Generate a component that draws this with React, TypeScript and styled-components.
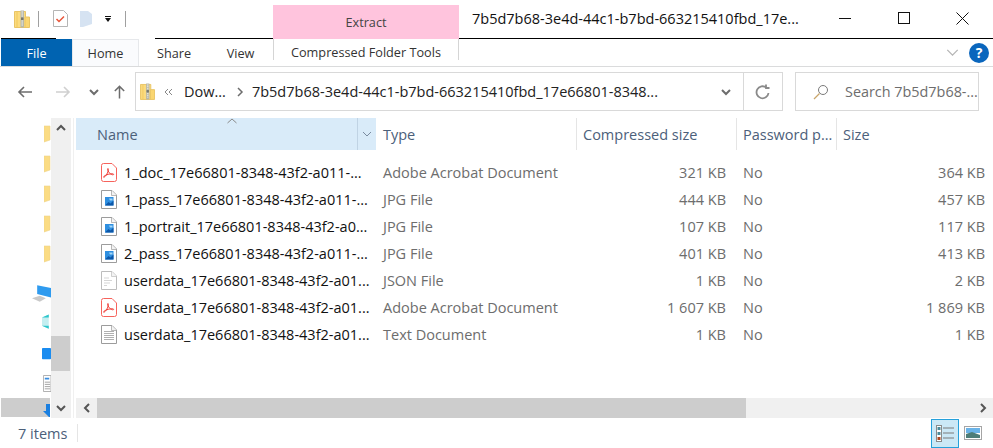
import React from 'react';
import styled, { createGlobalStyle } from 'styled-components';

const GlobalStyle = createGlobalStyle`
  html, body {
    margin: 0;
    padding: 0;
    background: #fff;
    overflow: hidden;
  }
  * {
    box-sizing: border-box;
  }
`;

const Window = styled.div`
  width: 993px;
  height: 448px;
  display: flex;
  flex-direction: column;
  overflow: hidden;
  background: #fff;
  font-family: 'Open Sans', 'Noto Sans', sans-serif;
  font-size: 14.5px;
  color: #1a1a1a;
`;

/* title bar */
const TitleBar = styled.div`
  height: 39px;
  flex-shrink: 0;
  display: flex;
  align-items: flex-start;
`;

const QuickAccess = styled.div`
  width: 273px;
  height: 39px;
  flex-shrink: 0;
  display: flex;
  align-items: center;
  padding: 0 0 2px 14px;
  background:
    linear-gradient(to right, #000, #000) no-repeat 155px 38px / 118px 1px,
    linear-gradient(to right, #000, #000) no-repeat 1px 38px / 55px 1px;
`;

const QuickSeparator = styled.span<{ $left: number; $right: number }>`
  width: 1px;
  height: 16px;
  background: #a0a0a0;
  margin: 0 ${p => p.$right}px 0 ${p => p.$left}px;
`;

const ContextHeader = styled.div`
  width: 186px;
  height: 34px;
  margin-top: 5px;
  flex-shrink: 0;
  display: flex;
  align-items: center;
  justify-content: center;
  background: #ffc4dd;
  color: #444;
  font-size: 12.7px;
`;

const TitleText = styled.div`
  flex: 1;
  height: 39px;
  display: flex;
  align-items: center;
  padding: 0 1px 2px 13px;
  border-bottom: 1px solid #000;
  color: #111;
  white-space: nowrap;
  justify-content: space-between;
`;

const WindowButtons = styled.div`
  display: flex;
  align-items: center;
`;

const WindowButton = styled.span`
  width: 59px;
  height: 36px;
  display: flex;
  align-items: center;
  justify-content: center;
`;

/* ribbon tabs */
const Ribbon = styled.div`
  height: 28px;
  flex-shrink: 0;
  display: flex;
  border-bottom: 1px solid #dadbdc;
  padding-left: 1px;
`;

const Tab = styled.div<{ $width: number; $kind?: 'file' | 'active' }>`
  width: ${p => p.$width}px;
  display: flex;
  align-items: center;
  justify-content: center;
  font-size: 12.7px;
  color: ${p => (p.$kind === 'file' ? '#fff' : '#333')};
  background: ${p => (p.$kind === 'file' ? '#0063b1' : p.$kind === 'active' ? '#fafbfd' : 'transparent')};
  ${p => p.$kind === 'active' && 'border: 1px solid #e6e8eb; border-bottom: none;'}
`;

const ContextTab = styled.div`
  width: 186px;
  height: 21px;
  margin-left: 1px;
  display: flex;
  align-items: center;
  justify-content: center;
  font-size: 12.7px;
  color: #333;
  border-left: 1px solid #d5d5d5;
  border-right: 1px solid #d5d5d5;
  padding-top: 4px;
`;

const RibbonTail = styled.div`
  flex: 1;
  display: flex;
  align-items: center;
  justify-content: flex-end;
  gap: 10px;
  padding: 0 4px 0 0;
`;

const HelpBadge = styled.span`
  width: 20px;
  height: 20px;
  border-radius: 50%;
  background: #0a66bd;
  color: #fff;
  font-size: 14px;
  font-weight: 700;
  display: flex;
  align-items: center;
  justify-content: center;
`;

/* navigation row */
const NavRow = styled.div`
  height: 44px;
  flex-shrink: 0;
  display: flex;
  align-items: center;
  padding: 5px 14px 0 0;
`;

const NavButton = styled.span<{ $width: number }>`
  width: ${p => p.$width}px;
  height: 39px;
  flex-shrink: 0;
  display: flex;
  align-items: center;
  justify-content: center;
`;

const AddressBox = styled.div`
  width: 648px;
  height: 39px;
  margin-left: 8px;
  flex-shrink: 0;
  border: 1px solid #d9d9d9;
  display: flex;
  align-items: center;
  padding-left: 4px;
  white-space: nowrap;
  color: #222;
`;

const Crumb = styled.span<{ $left: number }>`
  margin-left: ${p => p.$left}px;
  display: flex;
  align-items: center;
`;

const AddressEnd = styled.span`
  margin-left: auto;
  display: flex;
  align-items: center;
  height: 100%;
`;

const AddressAction = styled.span<{ $divided?: boolean }>`
  width: ${p => (p.$divided ? 39 : 34)}px;
  height: 100%;
  display: flex;
  align-items: center;
  justify-content: center;
  ${p => p.$divided && 'border-left: 1px solid #d9d9d9;'}
`;

const SearchBox = styled.div`
  width: 185px;
  height: 39px;
  margin-left: 12px;
  border: 1px solid #d9d9d9;
  display: flex;
  align-items: center;
  gap: 16px;
  padding-left: 17px;
  color: #6d6d6d;
  white-space: nowrap;
  font-size: 14.4px;
`;

/* body */
const Body = styled.div`
  flex: 1;
  min-height: 0;
  display: flex;
  padding-top: 7px;
`;

const TreePane = styled.div`
  width: 51px;
  flex-shrink: 0;
  overflow: hidden;
  display: flex;
  flex-direction: column;
  padding-top: 1px;
`;

const TreeItem = styled.div<{ $height: number; $indent?: number; $selected?: boolean }>`
  height: ${p => p.$height}px;
  flex-shrink: 0;
  display: flex;
  align-items: center;
  padding-left: ${p => p.$indent ?? 0}px;
  ${p => p.$selected && 'background: #cdcdcd; margin: 0 1px; align-items: flex-end;'}
`;

const VerticalBar = styled.div`
  width: 20px;
  flex-shrink: 0;
  background: #f0f0f0;
  display: flex;
  flex-direction: column;
  margin-right: 2px;
`;

const PaneGutter = styled.div`
  width: 3px;
  flex-shrink: 0;
  border-left: 1px solid #f0f0f0;
`;

const VerticalArrow = styled.span<{ $end?: boolean }>`
  height: 20px;
  display: flex;
  align-items: center;
  justify-content: center;
  ${p => p.$end && 'margin-top: auto;'}
`;

const VerticalThumb = styled.span`
  height: 35px;
  margin: 198px 1px 0 0;
  background: #cdcdcd;
`;

const ListPane = styled.div`
  flex: 1;
  min-width: 0;
  display: flex;
  flex-direction: column;
`;

const columns = '300px 200px 160px 100px 1fr';

const HeaderRow = styled.div`
  height: 32px;
  flex-shrink: 0;
  display: grid;
  grid-template-columns: ${columns};
  position: relative;
`;

const HeaderCell = styled.div<{ $active?: boolean }>`
  display: flex;
  align-items: center;
  padding-left: 6px;
  color: #4c607a;
  white-space: nowrap;
  overflow: hidden;
  border-left: 1px solid ${p => (p.$active ? 'transparent' : '#e5e5e5')};
`;

const NameHeader = styled.div`
  display: flex;
  align-items: stretch;
  background: #d9ebf9;
  color: #4c607a;
`;

const NameLabel = styled.span`
  flex: 1;
  display: flex;
  align-items: center;
  padding-left: 21px;
`;

const HeaderDrop = styled.span`
  width: 19px;
  display: flex;
  align-items: center;
  justify-content: center;
  border-left: 1px solid #c0d3e4;
`;

const SortCaret = styled.svg`
  position: absolute;
  left: 151px;
  top: 0;
`;

const Rows = styled.div`
  flex: 1;
  min-height: 0;
  padding-top: 9px;
`;

const FileRow = styled.div`
  height: 27px;
  display: grid;
  grid-template-columns: ${columns};
  align-items: center;
  color: #6d6d6d;
  white-space: nowrap;
`;

const NameCell = styled.div`
  display: flex;
  align-items: center;
  gap: 7px;
  padding-left: 25px;
  color: #111;
`;

const DetailCell = styled.div<{ $end?: boolean; $gap?: number }>`
  padding-left: ${p => (p.$end ? 0 : 7)}px;
  padding-right: ${p => p.$gap ?? 0}px;
  text-align: ${p => (p.$end ? 'right' : 'left')};
`;

const HorizontalBar = styled.div`
  height: 20px;
  flex-shrink: 0;
  background: #f0f0f0;
  display: flex;
  align-items: stretch;
`;

const HorizontalArrow = styled.span<{ $end?: boolean }>`
  width: 21px;
  display: flex;
  align-items: center;
  justify-content: center;
  ${p => p.$end && 'margin-left: auto;'}
`;

const HorizontalThumb = styled.span`
  width: 649px;
  background: #cdcdcd;
`;

const StatusBar = styled.div`
  height: 30px;
  flex-shrink: 0;
  display: flex;
  align-items: center;
  padding-left: 18px;
  color: #4c607a;
`;

const StatusCount = styled.span`
  width: 60px;
  height: 18px;
  display: flex;
  align-items: center;
  border-right: 1px solid #e5e5e5;
`;

const ViewSwitch = styled.div`
  margin-left: auto;
  display: flex;
  align-items: center;
  padding-right: 6px;
`;

const ViewButton = styled.span<{ $on?: boolean }>`
  width: 28px;
  height: 29px;
  display: flex;
  align-items: center;
  justify-content: center;
  ${p => p.$on && 'background: #cbe8f6; border: 1px solid #26a0da;'}
`;

const ZipFolder: React.FC<{ size?: number }> = ({ size = 16 }) => (
  <svg width={size} height={size + 2} viewBox="0 0 16 18">
    <path d="M0.500 1.500h11v16h-11z" fill="#fbdb7f" stroke="#e9c465" />
    <path d="M2.500 2v15M3.500 2v15" stroke="#f3cc62" strokeWidth="0.600" />
    <path d="M11 7h4.500v10.500H11z" fill="#fad671" stroke="#e9c465" />
    <rect x="6.500" y="0.500" width="3.500" height="17" fill="#b8b8aa" />
    <path d="M7.500 1.500h1.500v1H7.500zM7.500 3.500h1.500v1H7.500zM7.500 5.500h1.500v1H7.500zM7.500 10.500h1.500v1H7.500zM7.500 12.500h1.500v1H7.500zM7.500 14.500h1.500v1H7.500z" fill="#efefe6" />
    <rect x="7" y="7.500" width="2.500" height="2.500" fill="#77776c" />
  </svg>
);

const FileShell: React.FC<{ children: React.ReactNode; stroke?: string }> = ({ children, stroke = '#9c9c9c' }) => (
  <svg width="16" height="19" viewBox="0 0 16 19">
    <path d="M0.500 0.500h10.500l4.500 4.500v13.500h-15z" fill="#fff" stroke={stroke} />
    <path d="M10.500 0.500v5h5" fill="#f3f3f3" stroke={stroke} strokeWidth="0.700" />
    {children}
  </svg>
);

const PdfIcon = () => (
  <svg width="16" height="19" viewBox="0 0 16 19">
    <path d="M2.500 0.500h8.500l4.500 4.500v11.500a2 2 0 0 1-2 2h-11a2 2 0 0 1-2-2v-14a2 2 0 0 1 2-2z" fill="#fff" stroke="#f6635c" />
    <path
      d="M2.800 14.400c1.800-.7 3.600-3.700 4.400-6.600.4-1.500.1-2.600-.4-2.200-.5.400 0 2 1 3.500 1.100 1.700 2.600 2.600 3.900 2.700 1.200.1 1.300-.9.100-1-2.300-.2-5.700.6-7.700 1.700-1.300.7-2 1.600-1.300 1.900z"
      fill="none"
      stroke="#f0403a"
      strokeWidth="1"
    />
  </svg>
);

const ImageIcon = () => (
  <FileShell>
    <rect x="4" y="7" width="8.500" height="8.500" fill="#2f8fe0" />
    <path d="M4 15.500l3.500-3.500 2 1.500 3-3v5z" fill="#0d57a8" />
    <path d="M8 8.500h3.500v2H9z" fill="#a6d8f7" />
  </FileShell>
);

const JsonIcon = () => (
  <FileShell stroke="#bdbdbd">
    <path d="M3 7h5M3 9.500h8M3 12h6M3 14.500h3" stroke="#d5d5d5" />
  </FileShell>
);

const TextIcon = () => (
  <FileShell>
    <path d="M3 6.500h10M3 8.500h10M3 10.500h10M3 12.500h10M3 14.500h10" stroke="#b0b0b0" />
  </FileShell>
);

const Chevron: React.FC<{ dir?: 'up' | 'down' | 'left' | 'right'; color?: string; w?: number; size?: number }> = ({
  dir = 'down',
  color = '#6d6d6d',
  w = 2,
  size = 10,
}) => {
  const rotate = { down: 0, up: 180, left: 90, right: -90 }[dir];
  return (
    <svg width={size} height={size} viewBox="0 0 10 10" style={{ transform: `rotate(${rotate}deg)` }}>
      <path d="M1 3l4 4 4-4" fill="none" stroke={color} strokeWidth={w} />
    </svg>
  );
};

const Arrow: React.FC<{ d: string; color: string }> = ({ d, color }) => (
  <svg width="16" height="16" viewBox="0 0 16 16">
    <path d={d} fill="none" stroke={color} strokeWidth="1.600" />
  </svg>
);

const FolderSlice = () => (
  <svg width="7" height="18" viewBox="0 0 7 18">
    <path d="M0 1h6v14l-6 2z" fill="#fbdc84" stroke="#efd48b" strokeWidth="0.600" />
  </svg>
);

type FileEntry = {
  name: string;
  icon: React.ReactNode;
  type: string;
  packed: string;
  size: string;
};

const files: FileEntry[] = [
  { name: '1_doc_17e66801-8348-43f2-a011-...', icon: <PdfIcon />, type: 'Adobe Acrobat Document', packed: '321 KB', size: '364 KB' },
  { name: '1_pass_17e66801-8348-43f2-a011-...', icon: <ImageIcon />, type: 'JPG File', packed: '444 KB', size: '457 KB' },
  { name: '1_portrait_17e66801-8348-43f2-a0...', icon: <ImageIcon />, type: 'JPG File', packed: '107 KB', size: '117 KB' },
  { name: '2_pass_17e66801-8348-43f2-a011-...', icon: <ImageIcon />, type: 'JPG File', packed: '401 KB', size: '413 KB' },
  { name: 'userdata_17e66801-8348-43f2-a01...', icon: <JsonIcon />, type: 'JSON File', packed: '1 KB', size: '2 KB' },
  { name: 'userdata_17e66801-8348-43f2-a01...', icon: <PdfIcon />, type: 'Adobe Acrobat Document', packed: '1 607 KB', size: '1 869 KB' },
  { name: 'userdata_17e66801-8348-43f2-a01...', icon: <TextIcon />, type: 'Text Document', packed: '1 KB', size: '1 KB' },
];

const App: React.FC = () => (
  <>
    <GlobalStyle />
    <Window>
      <TitleBar>
        <QuickAccess>
          <ZipFolder />
          <QuickSeparator $left={8} $right={14} />
          <svg width="15" height="17" viewBox="0 0 15 17">
            <path d="M0.500 0.500h10l4 4v12h-14z" fill="#fff" stroke="#b5b5b5" />
            <path d="M3.500 9l2.500 2.500 5-5" fill="none" stroke="#e8553a" strokeWidth="1.500" />
          </svg>
          <svg width="12" height="17" viewBox="0 0 12 17" style={{ marginLeft: 12 }}>
            <path d="M0 1h8l4 3v10l-9 3H0z" fill="#d6e3f2" />
          </svg>
          <svg width="6" height="6" viewBox="0 0 6 6" style={{ marginLeft: 13 }}>
            <path d="M0 0h6v1H0zM0 2h6L3 6z" fill="#111" />
          </svg>
          <QuickSeparator $left={14} $right={0} />
        </QuickAccess>
        <ContextHeader>Extract</ContextHeader>
        <TitleText>
          7b5d7b68-3e4d-44c1-b7bd-663215410fbd_17e...
          <WindowButtons>
            <WindowButton>
              <svg width="12" height="12" viewBox="0 0 12 12"><path d="M0 6.500h12" stroke="#111" /></svg>
            </WindowButton>
            <WindowButton>
              <svg width="12" height="12" viewBox="0 0 12 12"><rect x="0.500" y="0.500" width="11" height="11" fill="none" stroke="#111" /></svg>
            </WindowButton>
            <WindowButton>
              <svg width="13" height="13" viewBox="0 0 13 13"><path d="M0.500 0.500l12 12M12.500 0.500l-12 12" stroke="#111" /></svg>
            </WindowButton>
          </WindowButtons>
        </TitleText>
      </TitleBar>

      <Ribbon>
        <Tab $width={71} $kind="file">File</Tab>
        <Tab $width={67} $kind="active">Home</Tab>
        <Tab $width={70}>Share</Tab>
        <Tab $width={63}>View</Tab>
        <ContextTab>Compressed Folder Tools</ContextTab>
        <RibbonTail>
          <Chevron color="#b5b5b5" w={1} size={13} />
          <HelpBadge>?</HelpBadge>
        </RibbonTail>
      </Ribbon>

      <NavRow>
        <NavButton $width={50}>
          <Arrow color="#6d6d6d" d="M15 8H2M7 3L2 8l5 5" />
        </NavButton>
        <NavButton $width={26}>
          <Arrow color="#d0d0d0" d="M1 8h13M9 3l5 5-5 5" />
        </NavButton>
        <NavButton $width={36}><Chevron /></NavButton>
        <NavButton $width={15}>
          <Arrow color="#6d6d6d" d="M8 15V2M3 7l5-5 5 5" />
        </NavButton>
        <AddressBox>
          <ZipFolder size={15} />
          <Crumb $left={9}>
            <svg width="10" height="8" viewBox="0 0 10 8">
              <path d="M4 1L1 4l3 3M8 1L5 4l3 3" fill="none" stroke="#888" />
            </svg>
          </Crumb>
          <Crumb $left={10}>Dow...</Crumb>
          <Crumb $left={9}><Chevron dir="right" w={1.500} /></Crumb>
          <Crumb $left={7}>7b5d7b68-3e4d-44c1-b7bd-663215410fbd_17e66801-8348...</Crumb>
          <AddressEnd>
            <AddressAction><Chevron /></AddressAction>
            <AddressAction $divided>
              <svg width="16" height="16" viewBox="0 0 16 16">
                <path d="M13.500 9a6 6 0 1 1-2.200-5.400M11 .5v3.500h3.500" fill="none" stroke="#8a8a8a" strokeWidth="1.800" />
              </svg>
            </AddressAction>
          </AddressEnd>
        </AddressBox>
        <SearchBox>
          <svg width="16" height="16" viewBox="0 0 16 16">
            <circle cx="10" cy="6" r="4.500" fill="none" stroke="#7a7a7a" />
            <path d="M6.500 9.500L1 15" stroke="#c9a56a" strokeWidth="1.300" />
          </svg>
          Search 7b5d7b68-...
        </SearchBox>
      </NavRow>

      <Body>
        <TreePane>
          {[0, 1, 2, 3, 4].map(i => (
            <TreeItem key={i} $height={30} $indent={44}><FolderSlice /></TreeItem>
          ))}
          <TreeItem $height={12} />
          <TreeItem $height={24} $indent={32}>
            <svg width="22" height="19" viewBox="0 0 22 19">
              <path d="M6 0l16 3v11L6 10z" fill="#2f9bef" />
              <path d="M0 15l9-3 7 3-7 4z" fill="#c9c9c9" />
            </svg>
          </TreeItem>
          <TreeItem $height={32} $indent={42}>
            <svg width="12" height="19" viewBox="0 0 12 19">
              <path d="M0 4l9-4v19l-9-4z" fill="#c4eef0" />
              <path d="M0 4l9-4v4zM0 15l9 4v-4z" fill="#2cc6cc" />
            </svg>
          </TreeItem>
          <TreeItem $height={32} $indent={42}>
            <svg width="12" height="15" viewBox="0 0 12 15"><rect width="12" height="15" rx="1" fill="#1a8cf0" /></svg>
          </TreeItem>
          <TreeItem $height={28} $indent={43}>
            <svg width="9" height="19" viewBox="0 0 9 19">
              <path d="M.5.500h8.500v18H.500z" fill="#fff" stroke="#a8a8a8" />
              <path d="M2 4h5" stroke="#3a8ee0" strokeWidth="2" />
              <path d="M2 8h6M2 10.500h6M2 13h6M2 15.500h6" stroke="#9a9a9a" />
            </svg>
          </TreeItem>
          <TreeItem $height={1} />
          <TreeItem $height={19} $indent={42} $selected>
            <svg width="7" height="13" viewBox="0 0 7 13">
              <path d="M3 0h4v13H6L0 7h3z" fill="#1a7fe0" />
            </svg>
          </TreeItem>
        </TreePane>
        <VerticalBar>
          <VerticalArrow><Chevron dir="up" color="#555" /></VerticalArrow>
          <VerticalThumb />
          <VerticalArrow $end><Chevron color="#555" /></VerticalArrow>
        </VerticalBar>
        <PaneGutter />
        <ListPane>
          <HeaderRow>
            <NameHeader>
              <NameLabel>Name</NameLabel>
              <HeaderDrop><Chevron color="#7a8ba0" w={1} /></HeaderDrop>
            </NameHeader>
            <HeaderCell $active>Type</HeaderCell>
            <HeaderCell>Compressed size</HeaderCell>
            <HeaderCell>Password p...</HeaderCell>
            <HeaderCell>Size</HeaderCell>
            <SortCaret width="10" height="6" viewBox="0 0 10 6">
              <path d="M.5 5L5 1l4.500 4" fill="none" stroke="#8a8a8a" />
            </SortCaret>
          </HeaderRow>
          <Rows>
            {files.map((file, i) => (
              <FileRow key={i}>
                <NameCell>{file.icon}{file.name}</NameCell>
                <DetailCell>{file.type}</DetailCell>
                <DetailCell $end $gap={10}>{file.packed}</DetailCell>
                <DetailCell>No</DetailCell>
                <DetailCell $end $gap={8}>{file.size}</DetailCell>
              </FileRow>
            ))}
          </Rows>
          <HorizontalBar>
            <HorizontalArrow><Chevron dir="left" color="#555" /></HorizontalArrow>
            <HorizontalThumb />
            <HorizontalArrow $end><Chevron dir="right" color="#555" /></HorizontalArrow>
          </HorizontalBar>
        </ListPane>
      </Body>

      <StatusBar>
        <StatusCount>7 items</StatusCount>
        <ViewSwitch>
          <ViewButton $on>
            <svg width="18" height="17" viewBox="0 0 18 17">
              <rect x="0.500" y="0.500" width="5" height="16" fill="#fff" stroke="#8a8a8a" />
              <rect x="1.500" y="2" width="3" height="3" fill="#4a8a9a" />
              <rect x="1.500" y="7" width="3" height="3" fill="#4a8a9a" />
              <rect x="1.500" y="12" width="3" height="3" fill="#b0451d" />
              <path d="M7 3h11M7 8h11M7 13h11" stroke="#7a7a7a" />
            </svg>
          </ViewButton>
          <ViewButton>
            <svg width="18" height="14" viewBox="0 0 18 14">
              <rect x="0.500" y="0.500" width="17" height="13" fill="#fff" stroke="#a5a5a5" />
              <rect x="2" y="2" width="14" height="5" fill="#6ab3e8" />
              <path d="M2 8l6-2 8 3v3H2z" fill="#4d7d78" />
            </svg>
          </ViewButton>
        </ViewSwitch>
      </StatusBar>
    </Window>
  </>
);

export default App;
